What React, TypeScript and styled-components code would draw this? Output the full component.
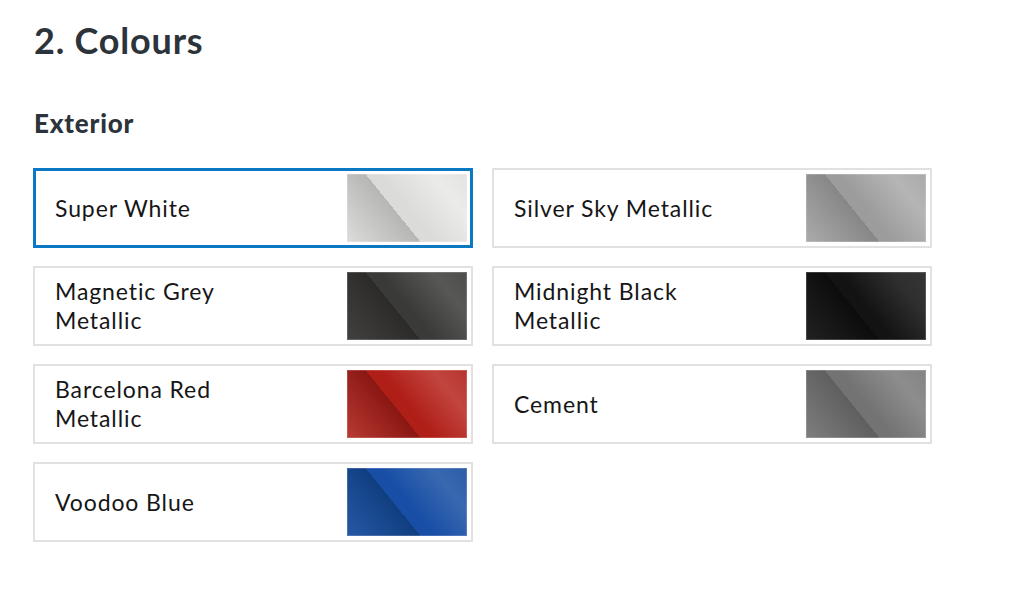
import React from "react";
import styled, { createGlobalStyle } from "styled-components";

const Global = createGlobalStyle`
  html, body { margin: 0; padding: 0; background: #ffffff; }
  body { font-family: "Lato", "Noto Sans", sans-serif; }
`;

const Page = styled.main`
  padding: 18px 0 0 34px;
  width: 1024px;
  height: 590px;
  box-sizing: border-box;
`;

const Title = styled.h1`
  margin: 0;
  font-size: 36px;
  line-height: 44px;
  font-weight: 700;
  color: #2d333b;
  letter-spacing: 0.8px;
`;

const SubTitle = styled.h2`
  margin: 46px 0 0 0;
  font-size: 26px;
  line-height: 31px;
  font-weight: 900;
  color: #2d333b;
  letter-spacing: 0.8px;
`;

const Grid = styled.div`
  margin-top: 29px;
  margin-left: -1px;
  display: grid;
  grid-template-columns: 440px 440px;
  column-gap: 19px;
  row-gap: 18px;
`;

const Card = styled.button<{ $selected?: boolean }>`
  all: unset;
  box-sizing: border-box;
  width: 440px;
  height: 80px;
  display: flex;
  align-items: center;
  justify-content: space-between;
  padding: 4px 4px 4px 20px;
  border: ${(p) => (p.$selected ? "3px solid #0a78c2" : "2px solid #e1e1e1")};
  padding-left: ${(p) => (p.$selected ? "19px" : "20px")};
  padding-right: ${(p) => (p.$selected ? "3px" : "4px")};
  background: #fff;
  cursor: pointer;
`;

const Name = styled.span`
  font-size: 23px;
  line-height: 29px;
  color: #161616;
  max-width: 235px;
  letter-spacing: 0.9px;
`;

type Tone = { l0: string; l1: string; r0: string; r1: string; r2: string };

const Swatch = styled.div<{ $t: Tone }>`
  width: 120px;
  height: 68px;
  flex: none;
  box-shadow: inset 0 0 0 1px rgba(255, 255, 255, 0.18);
  background: ${({ $t }) =>
    `linear-gradient(51deg, ${$t.l0} 0%, ${$t.l1} 42%, ${$t.r0} 42%, ${$t.r0} 50%, ${$t.r1} 80%, ${$t.r2} 100%)`};
`;

const colours: { name: string; tone: Tone; selected?: boolean }[] = [
  { name: "Super White", selected: true, tone: { l0: "#dcdcda", l1: "#b6b6b4", r0: "#dbdbd9", r1: "#ebebe9", r2: "#e3e3e1" } },
  { name: "Silver Sky Metallic", tone: { l0: "#ababab", l1: "#878787", r0: "#9c9c9c", r1: "#b5b5b5", r2: "#aaaaaa" } },
  { name: "Magnetic Grey Metallic", tone: { l0: "#424140", l1: "#2c2b2a", r0: "#3a3a39", r1: "#575756", r2: "#4e4e4d" } },
  { name: "Midnight Black Metallic", tone: { l0: "#222222", l1: "#0c0c0c", r0: "#131313", r1: "#2f2f2f", r2: "#353535" } },
  { name: "Barcelona Red Metallic", tone: { l0: "#b93a34", l1: "#8a1712", r0: "#b01e18", r1: "#c2453f", r2: "#b7342f" } },
  { name: "Cement", tone: { l0: "#7e7e7e", l1: "#5f5f5f", r0: "#737373", r1: "#8d8d8d", r2: "#848484" } },
  { name: "Voodoo Blue", tone: { l0: "#2658a6", l1: "#103f80", r0: "#184ea6", r1: "#3868b0", r2: "#2c5da6" } },
];

export default function App() {
  return (
    <>
      <Global />
      <Page>
        <Title>2. Colours</Title>
        <SubTitle>Exterior</SubTitle>
        <Grid>
          {colours.map((c) => (
            <Card key={c.name} $selected={c.selected}>
              <Name>{c.name}</Name>
              <Swatch $t={c.tone} />
            </Card>
          ))}
        </Grid>
      </Page>
    </>
  );
}
